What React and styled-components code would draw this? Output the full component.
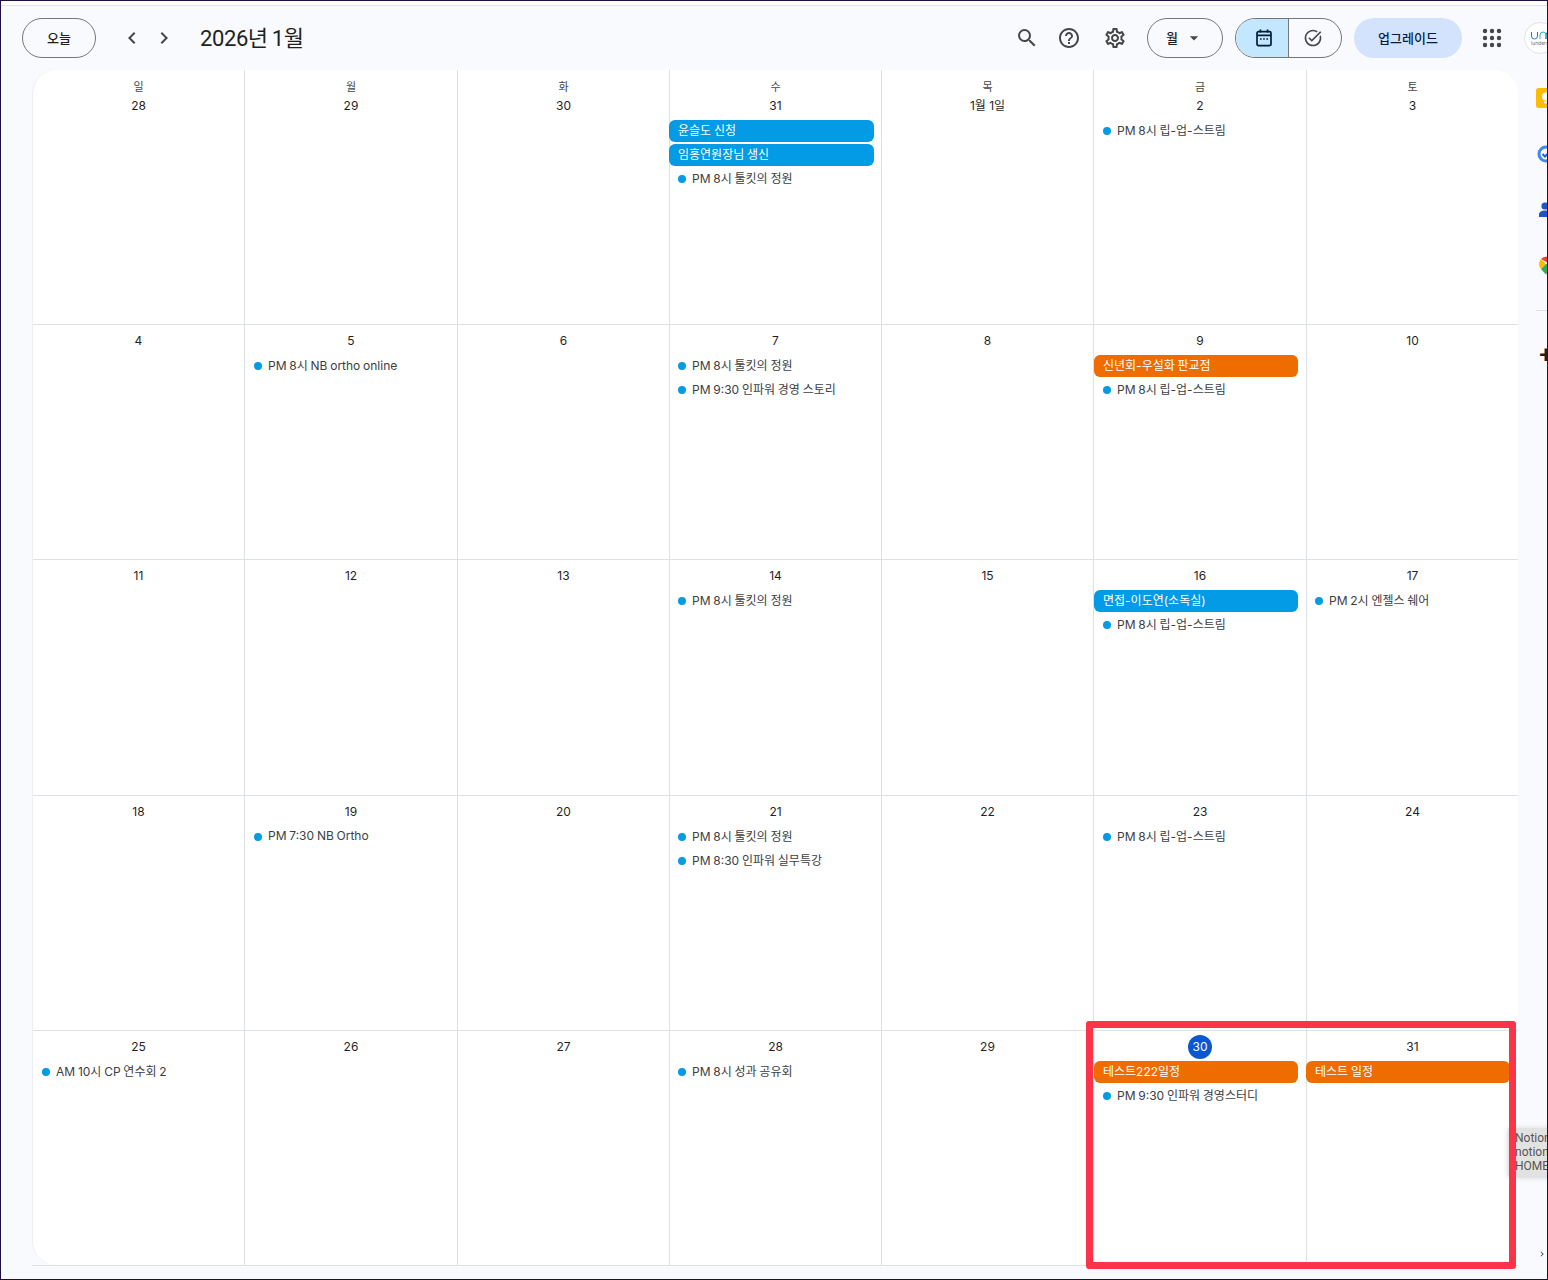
import styled, { createGlobalStyle } from 'styled-components'
import {
  MdSearch,
  MdHelpOutline,
  MdOutlineSettings,
  MdChevronLeft,
  MdChevronRight,
  MdArrowDropDown,
  MdOutlineTaskAlt,
} from 'react-icons/md'

const blue = '#039be5'
const orange = '#ef6c00'
const line = '#dde0e5'
const font = 'Inter, "Noto Sans CJK KR", sans-serif'
const titleFont = 'Roboto, "Noto Sans CJK KR", sans-serif'

const weekdays = ['일', '월', '화', '수', '목', '금', '토']

const insets = [
  { barLeft: -1, barTrim: 7, barPad: 9, dotPad: 9 },
  { barLeft: -1, barTrim: 7, barPad: 9, dotPad: 9 },
  { barLeft: -1, barTrim: 7, barPad: 9, dotPad: 9 },
  { barLeft: -1, barTrim: 6, barPad: 9, dotPad: 8 },
  { barLeft: -1, barTrim: 7, barPad: 9, dotPad: 9 },
  { barLeft: 0, barTrim: 8, barPad: 9, dotPad: 9 },
  { barLeft: -1, barTrim: 7, barPad: 9, dotPad: 8 },
]

const bar = (text, color = blue) => ({ text, color })
const dot = (text) => ({ text })

const weeks = [
  [
    { label: '28' }, { label: '29' }, { label: '30' },
    { label: '31', events: [bar('윤슬도 신청'), bar('임홍연원장님 생신'), dot('PM 8시 툴킷의 정원')] },
    { label: '1월 1일' },
    { label: '2', events: [dot('PM 8시 립-업-스트림')] },
    { label: '3' },
  ],
  [
    { label: '4' },
    { label: '5', events: [dot('PM 8시 NB ortho online')] },
    { label: '6' },
    { label: '7', events: [dot('PM 8시 툴킷의 정원'), dot('PM 9:30 인파워 경영 스토리')] },
    { label: '8' },
    { label: '9', events: [bar('신년회-우설화 판교점', orange), dot('PM 8시 립-업-스트림')] },
    { label: '10' },
  ],
  [
    { label: '11' }, { label: '12' }, { label: '13' },
    { label: '14', events: [dot('PM 8시 툴킷의 정원')] },
    { label: '15' },
    { label: '16', events: [bar('면접-이도연(소독실)'), dot('PM 8시 립-업-스트림')] },
    { label: '17', events: [dot('PM 2시 엔젤스 쉐어')] },
  ],
  [
    { label: '18' },
    { label: '19', events: [dot('PM 7:30 NB Ortho')] },
    { label: '20' },
    { label: '21', events: [dot('PM 8시 툴킷의 정원'), dot('PM 8:30 인파워 실무특강')] },
    { label: '22' },
    { label: '23', events: [dot('PM 8시 립-업-스트림')] },
    { label: '24' },
  ],
  [
    { label: '25', events: [dot('AM 10시 CP 연수회 2')] },
    { label: '26' }, { label: '27' },
    { label: '28', events: [dot('PM 8시 성과 공유회')] },
    { label: '29' },
    { label: '30', today: true, events: [bar('테스트222일정', orange), dot('PM 9:30 인파워 경영스터디')] },
    { label: '31', events: [bar('테스트 일정', orange)] },
  ],
]

const GlobalStyle = createGlobalStyle`
  html, body {
    margin: 0;
    padding: 0;
    background: #f8fafd;
  }
  * {
    box-sizing: border-box;
  }
`

const Frame = styled.div`
  position: relative;
  width: 1548px;
  height: 1280px;
  display: flex;
  flex-direction: column;
  overflow: hidden;
  background: #f8fafd;
  border: 1px solid #1d0f45;
  font-family: ${font};
  color: #1f1f1f;
`

const TopStrip = styled.div`
  height: 5px;
  flex: none;
  background: #fff;
  border-bottom: 1px solid #e3e3ea;
`

const Toolbar = styled.header`
  height: 64px;
  flex: none;
  display: flex;
  align-items: center;
  padding-left: 21px;
`

const PillButton = styled.button`
  height: 40px;
  width: ${(p) => p.$width}px;
  margin-left: ${(p) => p.$ml || 0}px;
  flex: none;
  display: flex;
  align-items: center;
  justify-content: center;
  gap: 6px;
  padding: 0 0 1px;
  border: 1px solid #747775;
  border-radius: 20px;
  background: transparent;
  font: 500 13px ${font};
  color: #1f1f1f;
`

const IconButton = styled.span`
  width: 24px;
  height: 24px;
  margin-left: ${(p) => (p.$push ? 'auto' : `${p.$ml || 0}px`)};
  flex: none;
  display: flex;
  color: #444746;
  font-size: 24px;
`

const Title = styled.h1`
  margin: 0 0 0 24px;
  padding-bottom: 4px;
  flex: none;
  font: 400 22px ${titleFont};
  letter-spacing: -0.4px;
  word-spacing: -1px;
  color: #1f1f1f;
  white-space: nowrap;
`

const ToggleGroup = styled.div`
  width: 107px;
  height: 40px;
  margin-left: 12px;
  display: flex;
  flex: none;
  border: 1px solid #747775;
  border-radius: 20px;
  overflow: hidden;
`

const ToggleSide = styled.span`
  flex: 1;
  display: flex;
  align-items: center;
  justify-content: center;
  padding: ${(p) => (p.$active ? '0 0 0 4px' : '0 4px 0 0')};
  background: ${(p) => (p.$active ? '#c2e7ff' : 'transparent')};
  color: ${(p) => (p.$active ? '#001d35' : '#444746')};
  & + & {
    border-left: 1px solid #747775;
  }
`

const UpgradeButton = styled.button`
  width: 108px;
  height: 40px;
  margin-left: 12px;
  flex: none;
  padding: 0 0 2px;
  border: 0;
  border-radius: 20px;
  background: #d3e3fd;
  color: #041e49;
  font: 500 13px ${font};
`

const Avatar = styled.div`
  width: 32px;
  height: 32px;
  margin: 0 -9px 0 20px;
  flex: none;
  display: flex;
  flex-direction: column;
  align-items: flex-start;
  justify-content: center;
  padding-left: 6px;
  border: 1px solid #e3e3e3;
  border-radius: 50%;
  background: #fff;
  color: #6b7280;
  font-size: 5px;
  line-height: 6px;
`

const Main = styled.main`
  flex: 1;
  min-height: 0;
  display: flex;
  padding-left: 31px;
`

const CalendarWrap = styled.div`
  width: 1486px;
  height: 1196px;
  flex: none;
  border-bottom: 1px solid ${line};
`

const MonthGrid = styled.div`
  height: 1195px;
  display: grid;
  grid-template-columns: 212px 213px 212px 212px 212px 213px 211px;
  grid-template-rows: 255px 235px 236px 235px 234px;
  border-left: 1px solid #eceef2;
  border-radius: 24px;
  background: #fff;
`

const Cell = styled.div`
  padding-top: 4px;
  border-right: ${(p) => (p.$lastCol ? '0' : `1px solid ${line}`)};
  border-bottom: ${(p) => (p.$lastRow ? '0' : `1px solid ${line}`)};
`

const Weekday = styled.div`
  height: 20px;
  padding-top: 7px;
  text-align: center;
  font-size: 11px;
  font-weight: 400;
  line-height: 12px;
  color: #444746;
`

const DateLabel = styled.div`
  width: ${(p) => (p.$today ? '24px' : 'auto')};
  height: 24px;
  margin: 0 auto;
  border-radius: 50%;
  text-align: center;
  font-size: 12px;
  font-weight: 400;
  line-height: 24px;
  color: ${(p) => (p.$today ? '#fff' : '#1f1f1f')};
  background: ${(p) => (p.$today ? '#0b57d0' : 'transparent')};
`

const EventList = styled.div`
  margin-top: 2px;
  display: flex;
  flex-direction: column;
  gap: 2px;
`

const EventBar = styled.div`
  width: calc(100% - ${(p) => p.$trim}px);
  height: 22px;
  margin-left: ${(p) => p.$left}px;
  padding-left: ${(p) => p.$pad}px;
  border-radius: 6px;
  background: ${(p) => p.$color};
  color: #fff;
  font-size: 12px;
  line-height: 21px;
  word-spacing: -0.6px;
  white-space: nowrap;
`

const EventDot = styled.div`
  height: 22px;
  display: flex;
  align-items: center;
  gap: 6px;
  padding-left: ${(p) => p.$pad}px;
  font-size: 12px;
  word-spacing: -0.6px;
  color: #3c4043;
  white-space: nowrap;
  &::before {
    content: '';
    width: 8px;
    height: 8px;
    border-radius: 50%;
    background: ${blue};
  }
`

const EventText = styled.span`
  padding-bottom: 3px;
`

const Rail = styled.aside`
  width: 29px;
  flex: none;
  display: flex;
  flex-direction: column;
  padding: 18px 0 13px 18px;
  overflow: hidden;
`

const RailIcon = styled.svg`
  width: 20px;
  height: 20px;
  flex: none;
  margin-bottom: 36px;
  overflow: visible;
`

const RailDivider = styled.div`
  width: 20px;
  height: 1px;
  flex: none;
  margin-top: -2px;
  background: #dde0e5;
`

const AddGlyph = styled.div`
  width: 24px;
  height: 24px;
  flex: none;
  margin: 33px 0 0 -2px;
  font: 500 24px ${titleFont};
  line-height: 22px;
  text-align: center;
  color: #1f1f1f;
`

const CollapseGlyph = styled.span`
  margin: auto 0 0 1px;
  display: flex;
  font-size: 24px;
  color: #3c4043;
`

const Tooltip = styled.div`
  position: absolute;
  left: 1507px;
  top: 1127px;
  width: 60px;
  height: 48px;
  padding: 3px 0 0 7px;
  background: #e2e2e1;
  box-shadow: 0 1px 6px rgba(0, 0, 0, 0.18);
  font: 400 12px ${titleFont};
  line-height: 14px;
  color: #555;
  white-space: nowrap;
`

const Highlight = styled.div`
  position: absolute;
  left: 1085px;
  top: 1020px;
  width: 430px;
  height: 248px;
  border: 7px solid #fb3449;
  border-radius: 3px;
  pointer-events: none;
`

const CalendarIcon = () => (
  <svg width="20" height="20" viewBox="0 0 20 20" fill="none">
    <rect x="3" y="3.6" width="14" height="14" rx="1.6" stroke="currentColor" strokeWidth="1.7" />
    <path d="M3 7.4h14" stroke="currentColor" strokeWidth="1.7" />
    <path d="M6.4 1.6v3M13.6 1.6v3" stroke="currentColor" strokeWidth="1.7" />
    <path d="M6 11h1.6M9.2 11h1.6M12.4 11H14" stroke="currentColor" strokeWidth="1.6" />
  </svg>
)

const AppsIcon = () => (
  <svg width="24" height="24" viewBox="0 0 24 24" fill="#444746">
    {[5, 12, 19].map((cy) =>
      [5, 12, 19].map((cx) => <circle key={`${cx}-${cy}`} cx={cx} cy={cy} r="2.2" />)
    )}
  </svg>
)

const AvatarLogo = () => (
  <svg width="24" height="9" viewBox="0 0 24 9" fill="none">
    <path d="M.5 1v4a3 3 0 0 0 6 0V1" stroke="#1a7fc4" strokeWidth="1" />
    <path d="M9 8V4a3 3 0 0 1 6 0v4" stroke="#22b8b0" strokeWidth="1" />
    <path d="M15 8V4a3 3 0 0 1 6 0v4" stroke="#1a7fc4" strokeWidth="1" />
  </svg>
)

const Event = ({ event, inset }) =>
  event.color ? (
    <EventBar $color={event.color} $left={inset.barLeft} $trim={inset.barTrim} $pad={inset.barPad}>
      {event.text}
    </EventBar>
  ) : (
    <EventDot $pad={inset.dotPad}><EventText>{event.text}</EventText></EventDot>
  )

const App = () => (
  <Frame>
    <GlobalStyle />
    <TopStrip />
    <Toolbar>
      <PillButton $width={74}>오늘</PillButton>
      <IconButton $ml={24}><MdChevronLeft /></IconButton>
      <IconButton $ml={8}><MdChevronRight /></IconButton>
      <Title>2026년 1월</Title>

      <IconButton $push><MdSearch /></IconButton>
      <IconButton $ml={18}><MdHelpOutline /></IconButton>
      <IconButton $ml={22}><MdOutlineSettings /></IconButton>
      <PillButton $width={76} $ml={20}>
        월
        <MdArrowDropDown size={20} color="#444746" />
      </PillButton>
      <ToggleGroup>
        <ToggleSide $active><CalendarIcon /></ToggleSide>
        <ToggleSide><MdOutlineTaskAlt size={20} /></ToggleSide>
      </ToggleGroup>
      <UpgradeButton>업그레이드</UpgradeButton>
      <IconButton $ml={18}><AppsIcon /></IconButton>
      <Avatar>
        <AvatarLogo />
        <span>lunders</span>
      </Avatar>
    </Toolbar>

    <Main>
      <CalendarWrap>
        <MonthGrid>
          {weeks.map((week, w) =>
            week.map((day, d) => (
              <Cell key={`${w}-${d}`} $lastCol={d === 6} $lastRow={w === 4}>
                {w === 0 && <Weekday>{weekdays[d]}</Weekday>}
                <DateLabel $today={day.today}>{day.label}</DateLabel>
                {day.events && (
                  <EventList>
                    {day.events.map((event) => <Event key={event.text} event={event} inset={insets[d]} />)}
                  </EventList>
                )}
              </Cell>
            ))
          )}
        </MonthGrid>
      </CalendarWrap>

      <Rail>
        <RailIcon viewBox="0 0 20 20">
          <rect width="20" height="20" rx="2.5" fill="#fbbc04" />
          <circle cx="10" cy="8.5" r="4" fill="#fff" />
          <rect x="8" y="13.4" width="4" height="2" fill="#fff" />
        </RailIcon>
        <RailIcon viewBox="0 0 20 20">
          <circle cx="10" cy="10" r="7" fill="none" stroke="#4285f4" strokeWidth="3" />
          <path d="M6.5 10l2.5 2.5 4.5-4.5" fill="none" stroke="#1967d2" strokeWidth="2" />
        </RailIcon>
        <RailIcon viewBox="0 0 20 20">
          <circle cx="9" cy="6" r="3.6" fill="#1a56c4" />
          <path d="M3 17v-2.5C3 12 6 10.6 9 10.6s6 1.4 6 3.9V17z" fill="#1a56c4" />
        </RailIcon>
        <RailIcon viewBox="0 0 20 20">
          <path d="M5 3A7 7 0 0 1 12 1v6z" fill="#ea4335" />
          <path d="M3 8a7 7 0 0 1 2-5l5 5-5 5c-1-1.500-2-3-2-5z" fill="#fbbc04" />
          <path d="M5 13l5-5h3c0 5-2 8-3 11-1-2-3-3.500-5-6z" fill="#34a853" />
        </RailIcon>
        <RailDivider />
        <AddGlyph>+</AddGlyph>
        <CollapseGlyph><MdChevronRight /></CollapseGlyph>
      </Rail>
    </Main>

    <Tooltip>
      Notion<br />
      notion<br />
      HOME
    </Tooltip>
    <Highlight />
  </Frame>
)

export default App
